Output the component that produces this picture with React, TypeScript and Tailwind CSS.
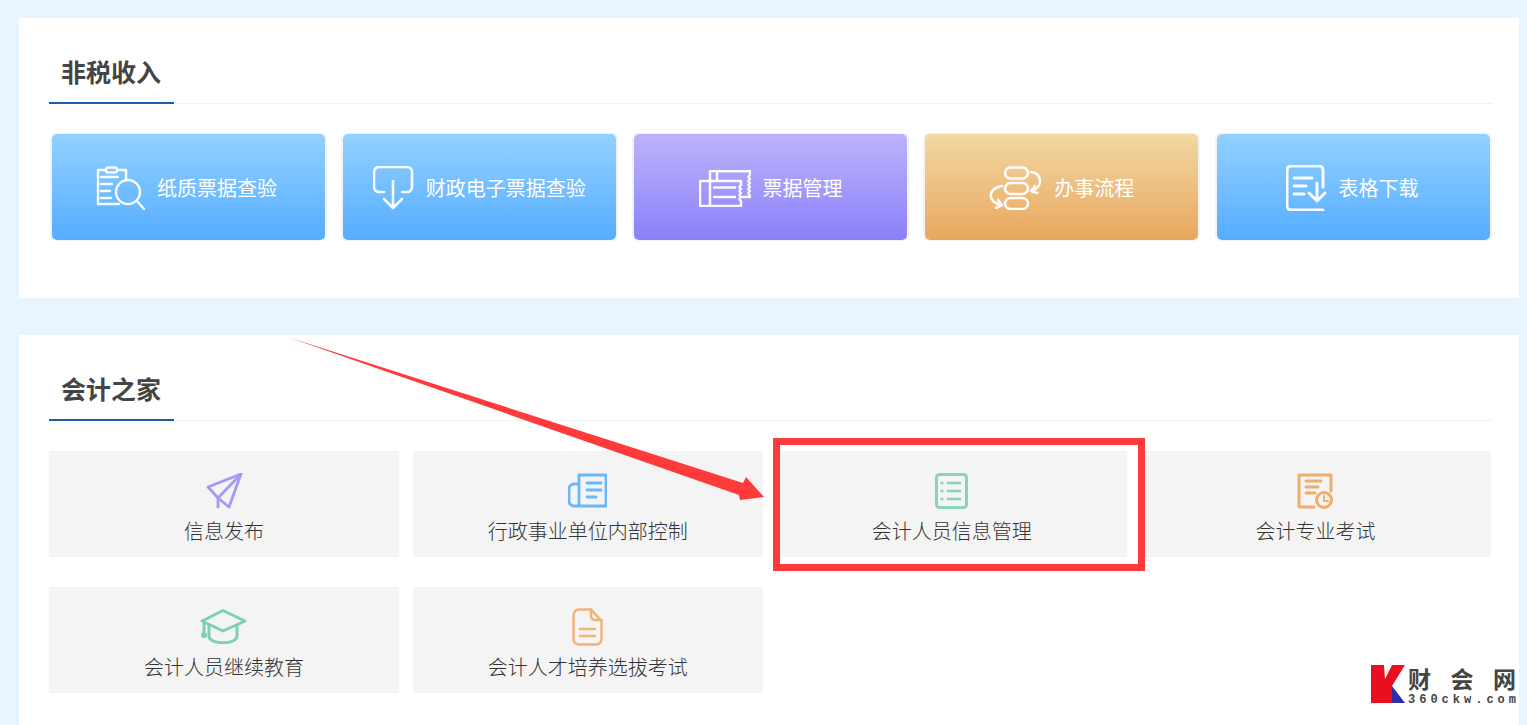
import React from "react";

const sw = { fill: "none", stroke: "currentColor", strokeLinecap: "round", strokeLinejoin: "round" } as const;

const IconCheck = () => (
  <svg width="49" height="45" viewBox="0 0 49 45" className="shrink-0 text-white/95" {...sw} strokeWidth="2.4">
    <path d="M10 4H2V38H23M21 4H30V14" />
    <rect x="10" y="1.500" width="11" height="5" rx="2" />
    <path d="M5 11H22M5 18H16M5 25H14M5 32H15" />
    <circle cx="32" cy="26" r="12" />
    <path d="M41 35L48 43" />
  </svg>
);

const IconDownload = () => (
  <svg width="41" height="44" viewBox="0 0 41 44" className="shrink-0 text-white/95" {...sw} strokeWidth="2.6">
    <path d="M11 26H6a5 5 0 0 1-5-5V6a5 5 0 0 1 5-5h28a5 5 0 0 1 5 5v15a5 5 0 0 1-5 5h-5" />
    <path d="M20 15V42M11 33l9 9 9-9" />
  </svg>
);

const IconTicket = () => (
  <svg width="52" height="37" viewBox="0 0 52 37" className="shrink-0 text-white/95" {...sw} strokeWidth="2.5">
    <path d="M1 11H42V15q-3 2 0 4q-3 2 0 4q-3 2 0 4q-3 2 0 4V36H1Z" />
    <path d="M18 10V1H51V5q-3 2 0 4q-3 2 0 4q-3 2 0 4q-3 2 0 4q-3 2 0 5V27H43" />
    <path d="M11 1H51M11 1V36M15 17.500H36M15 27H36" />
  </svg>
);

const IconFlow = () => (
  <svg width="53" height="44" viewBox="0 0 53 44" className="shrink-0 text-white/95" {...sw} strokeWidth="2.6">
    <rect x="16" y="1.500" width="23" height="11" rx="5.500" />
    <rect x="16" y="17" width="23" height="11" rx="5.500" />
    <rect x="16" y="32" width="23" height="11" rx="5.500" />
    <path d="M42 6c11 0 13 16 0 19M46 20l-4 5 6 2" />
    <path d="M13 20c-15 2-15 17 0 19M9 34l4 5-6 3" />
  </svg>
);

const IconForm = () => (
  <svg width="41" height="46" viewBox="0 0 41 46" className="shrink-0 text-white/95" {...sw} strokeWidth="3">
    <path d="M37 22V5a4 4 0 0 0-4-4H5a4 4 0 0 0-4 4v36a4 4 0 0 0 4 4h32" />
    <path d="M8 13H26M8 21H20M8 29H18" />
    <path d="M31 18V36M23 28l8 8 8-8" />
  </svg>
);

const IconPlane = () => (
  <svg width="38" height="36" viewBox="0 0 38 36" className="text-[#a39af5]" {...sw} strokeWidth="2.800">
    <path d="M36 1L3 14L13 25L24 34Z" />
    <path d="M36 1L13 25V34" />
  </svg>
);

const IconNews = () => (
  <svg width="39" height="35" viewBox="0 0 39 35" className="text-[#6ab6fb]" {...sw} strokeWidth="2.800">
    <path d="M11 33V2H38V33H6a5 5 0 0 1-5-5V16a5 5 0 0 1 5-5h5" />
    <path d="M19 10H33M19 17H33M19 24H28" />
  </svg>
);

const IconList = () => (
  <svg width="33" height="36" viewBox="0 0 33 36" className="text-[#88d5b8]" {...sw} strokeWidth="3">
    <rect x="1.500" y="1.500" width="30" height="33" rx="3" />
    <path d="M7 10H7.100M7 18H7.100M7 26H7.100" />
    <path d="M13 10H25M13 18H25M13 26H25" strokeWidth="2.600" />
  </svg>
);

const IconExam = () => (
  <svg width="37" height="36" viewBox="0 0 37 36" className="text-[#f0ae6c]" {...sw} strokeWidth="3">
    <path d="M34 18V2H2V34H17" />
    <path d="M9 8H24M9 14H21M9 20H18" />
    <circle cx="27" cy="27" r="7.500" />
    <path d="M27 23V28H31" strokeWidth="2" />
  </svg>
);

const IconCap = () => (
  <svg width="47" height="36" viewBox="0 0 47 36" className="text-[#7dd0b0]" {...sw} strokeWidth="3">
    <path d="M23 1.500L45 12L23 22L2 12Z" />
    <path d="M9 16V27c0 9 28 9 28 0V16" />
    <path d="M4 13V24" />
    <circle cx="4" cy="26" r="1.500" />
  </svg>
);

const IconDoc = () => (
  <svg width="31" height="38" viewBox="0 0 31 38" className="text-[#efb47a]" {...sw} strokeWidth="2.500">
    <path d="M19 1.500H7a5.500 5.500 0 0 0-5.500 5.500V31A5.500 5.500 0 0 0 7 36.500H24A5.500 5.500 0 0 0 29.500 31V13Z" />
    <path d="M19 1.500V8a4 4 0 0 0 4 4H29.500" />
    <path d="M8 21H23M8 28H23" />
  </svg>
);

const cards = [
  { label: "纸质票据查验", icon: <IconCheck />, bg: "from-[#92d1ff] to-[#55acff] pr-[3px]" },
  { label: "财政电子票据查验", icon: <IconDownload />, bg: "from-[#92d1ff] to-[#55acff]" },
  { label: "票据管理", icon: <IconTicket />, bg: "from-[#bdb3fb] to-[#8b80f8]" },
  { label: "办事流程", icon: <IconFlow />, bg: "from-[#f1d8a2] to-[#e8a75e]" },
  { label: "表格下载", icon: <IconForm />, bg: "from-[#92d1ff] to-[#55acff] pr-[2px]" },
];

const tiles = [
  { label: "信息发布", icon: <IconPlane /> },
  { label: "行政事业单位内部控制", icon: <IconNews /> },
  { label: "会计人员信息管理", icon: <IconList /> },
  { label: "会计专业考试", icon: <IconExam /> },
  { label: "会计人员继续教育", icon: <IconCap /> },
  { label: "会计人才培养选拔考试", icon: <IconDoc /> },
];

const SectionTitle = ({ title }: { title: string }) => (
  <div className="h-[56px] w-[1444px] border-b border-[#f2f2f2]">
    <h2 className="h-[56px] w-[125px] border-b-2 border-[#1a5fa8] pl-3 text-[25px] font-bold leading-[46px] text-[#444]">
      {title}
    </h2>
  </div>
);

export default function App() {
  return (
    <div className="relative h-[725px] overflow-hidden bg-[#e8f5ff] pl-[19px] pt-[18px] font-['Noto_Sans_CJK_SC',sans-serif]">
      <section className="h-[280px] w-[1500px] bg-white pl-[30px] pt-[30px]">
        <SectionTitle title="非税收入" />
        <div className="ml-[0.5px] mt-[29px] flex gap-[14.25px]">
          {cards.map((card) => (
            <div
              key={card.label}
              className="h-[108px] w-[277px] rounded-[6px] border-x-2 border-y border-[#f3f3f3]"
            >
              <div
                className={`flex h-full items-center justify-center gap-3 rounded-[5px] bg-gradient-to-b pt-[2px] text-[20px] text-white ${card.bg}`}
              >
                {card.icon}
                <span>{card.label}</span>
              </div>
            </div>
          ))}
        </div>
      </section>

      <section className="mt-[37px] h-[400px] w-[1500px] bg-white pl-[30px] pt-[30px]">
        <SectionTitle title="会计之家" />
        <div className="mt-[30px] grid w-[1441.5px] grid-cols-4 gap-x-[14px] gap-y-[30px]">
          {tiles.map((tile) => (
            <div
              key={tile.label}
              className="flex h-[106px] flex-col items-center bg-[#f4f4f4] pt-[21px] text-[20px] font-light text-[#333]"
            >
              <div className="flex h-[37px] items-center justify-center">{tile.icon}</div>
              <div className="mt-[7px] leading-[30px]">{tile.label}</div>
            </div>
          ))}
        </div>
      </section>

      {/* red annotation drawn over the screenshot */}
      <div className="absolute left-[773px] top-[438px] h-[133px] w-[372px] border-[7px] border-[#ff3a3a]" />
      <svg className="absolute left-0 top-0" width="1527" height="725" viewBox="0 0 1527 725">
        <polygon
          points="289,337.500 743,483 746,477 764,497 740,500 739,495"
          fill="#ff3a3a"
        />
      </svg>

      {/* watermark logo */}
      <div className="absolute left-[1371px] top-[665px] flex bg-white">
        <svg width="34" height="38" viewBox="0 0 34 38" className="shrink-0">
          <polygon points="0,0 13,0 14,14 21,0 34,0 21,21 21,38 0,38" fill="#e8101e" />
          <polygon points="21,21 34,38 21,38" fill="#2c2fa8" />
        </svg>
        <div className="ml-[3px] w-[108px]">
          <div className="flex h-[27px] justify-between text-[23px] font-bold leading-[27px] text-[#444]">
            <span>财</span>
            <span>会</span>
            <span>网</span>
          </div>
          <div className="mt-[2px] font-['Liberation_Mono',monospace] text-[12px] font-bold leading-[12px] tracking-[4px] text-[#444]">
            360ckw.com
          </div>
        </div>
      </div>
    </div>
  );
}
